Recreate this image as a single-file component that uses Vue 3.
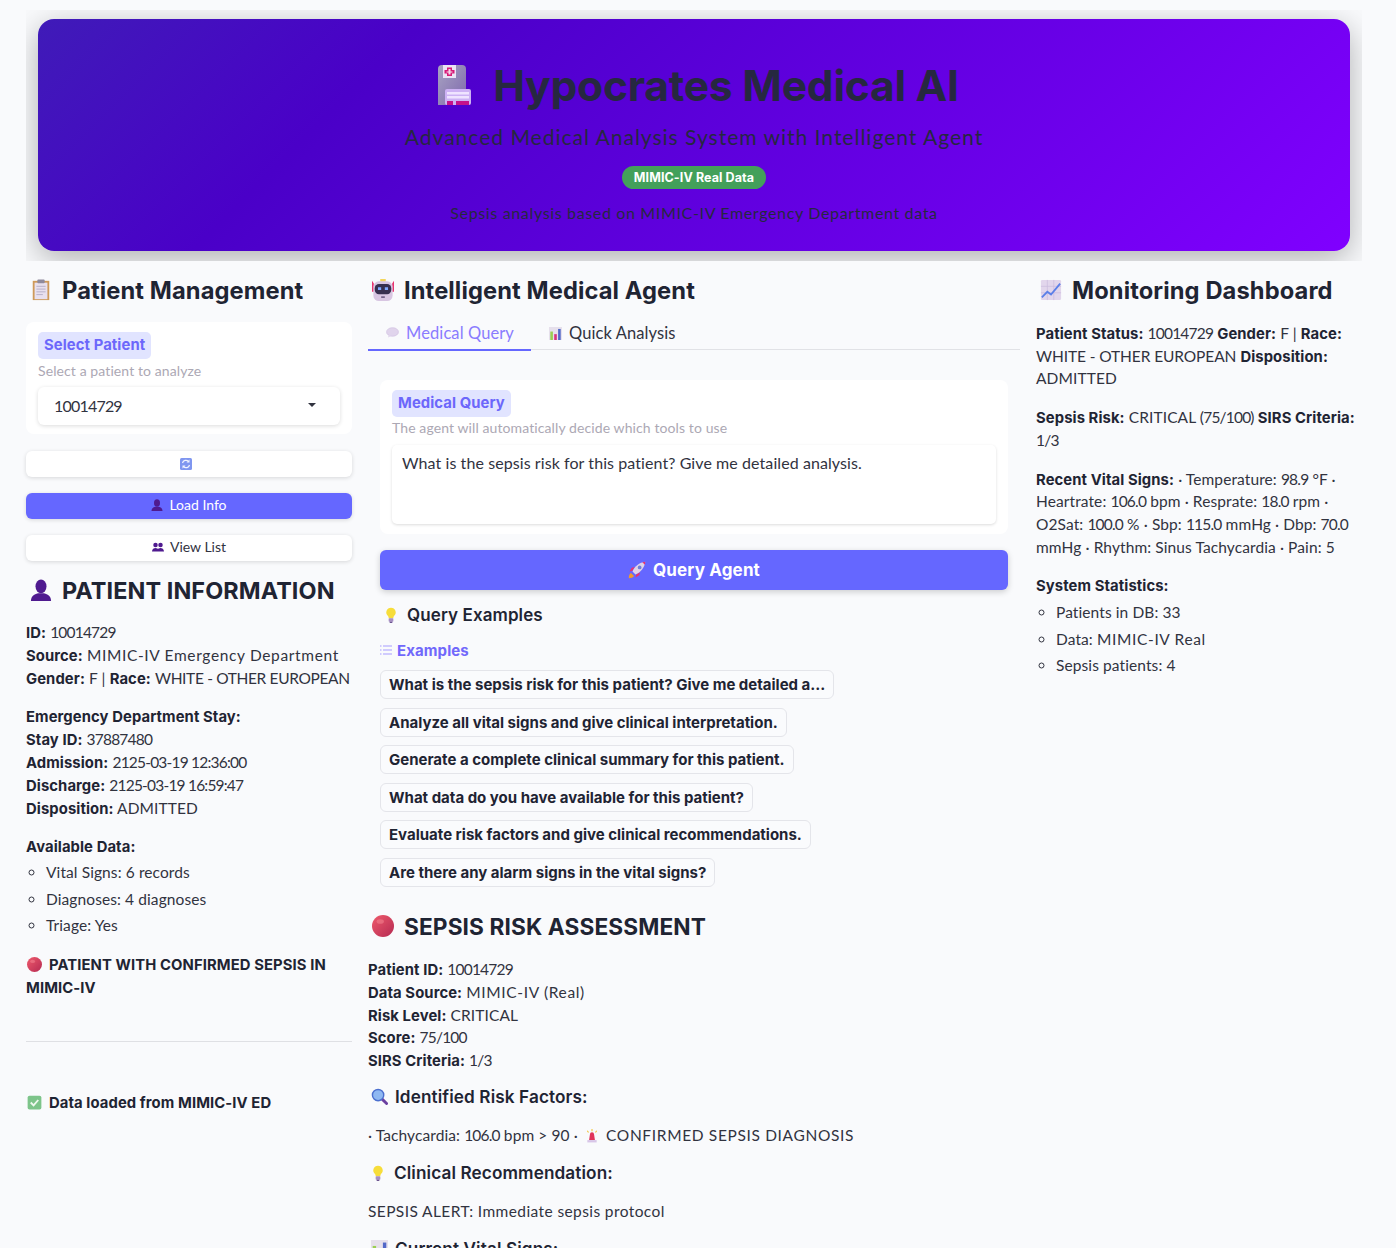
<template>
  <div class="page">
    <svg class="sprite" width="0" height="0" aria-hidden="true">
      <defs>
        <linearGradient id="g-ball" x1="0" y1="0" x2="1" y2="1">
          <stop offset="0" stop-color="#ef5a6c" />
          <stop offset="1" stop-color="#b52a52" />
        </linearGradient>
        <linearGradient id="g-tower" x1="0" y1="0" x2="1" y2="1">
          <stop offset="0" stop-color="#a9a4c2" />
          <stop offset="1" stop-color="#7d67ad" />
        </linearGradient>
        <symbol id="i-hospital" viewBox="0 0 36 40">
          <path d="M2 4a4 4 0 0 1 4-4h20a4 4 0 0 1 4 4v36H2z" fill="url(#g-tower)" />
          <rect x="7" y="0" width="13" height="13" fill="#ece3f5" />
          <path d="M11 2.500h5v2.500h2.500v3.500H16V11h-5V8.500H8.500V5H11z" fill="#d81b78" />
          <path d="M12.500 4h2v2.500h2v1h-2v2h-2v-2h-2v-1h2z" fill="#f3dbe9" />
          <rect x="9" y="24" width="26" height="16" rx="2" fill="#cdb2f4" />
          <rect x="11" y="27" width="22" height="2.500" fill="#efe3ff" />
          <rect x="11" y="31" width="22" height="2.500" fill="#efe3ff" />
          <rect x="11" y="36" width="6" height="4" fill="#c4128a" />
          <rect x="20" y="36" width="13" height="4" fill="#c4128a" />
        </symbol>
        <symbol id="i-clipboard" viewBox="0 0 20 24">
          <rect x="1" y="2" width="18" height="21" fill="#cf9a5a" />
          <rect x="3" y="4" width="14" height="18" fill="#e8e0ee" />
          <rect x="6" y="0.500" width="8" height="4" rx="1" fill="#8f8a9c" />
          <path d="M5 8h10M5 11h10M5 14h10M5 17h7" stroke="#b4adc6" stroke-width="1" />
        </symbol>
        <symbol id="i-robot" viewBox="0 0 24 24">
          <rect x="9" y="0" width="6" height="3" fill="#f3d65b" />
          <path d="M0 2v12h2V5zM24 2v12h-2V5z" fill="#e8346f" />
          <rect x="1.500" y="2.500" width="21" height="21.500" rx="6" fill="#d8c6e2" />
          <rect x="3" y="5.500" width="18" height="11" rx="4.500" fill="#37304f" />
          <rect x="6.500" y="9" width="3.500" height="3" fill="#7fa7ff" />
          <rect x="14" y="9" width="3.500" height="3" fill="#7fa7ff" />
          <rect x="10" y="19" width="4" height="1.500" fill="#5a4a72" />
        </symbol>
        <symbol id="i-chart" viewBox="0 0 24 24">
          <rect x="1" y="1" width="22" height="22" rx="1.500" fill="#e2d6ec" />
          <path d="M1 8h22M1 15h22M8 1v22M15 1v22" stroke="#c9b8db" stroke-width="0.700" />
          <path d="M2 20l6-6 4 3 10-12" fill="none" stroke="#5b7fe8" stroke-width="2" />
        </symbol>
        <symbol id="i-person" viewBox="0 0 24 24">
          <ellipse cx="12" cy="8" rx="6" ry="7.500" fill="#4f1a8f" />
          <path d="M1 24c0-6 5-8 8-8.500h6c3 .5 8 2.500 8 8.500z" fill="#4f1a8f" />
        </symbol>
        <symbol id="i-people" viewBox="0 0 24 20">
          <circle cx="7" cy="6" r="4.500" fill="#4f1a8f" />
          <circle cx="17" cy="6" r="4.500" fill="#4f1a8f" />
          <path d="M0 19c0-5 4-7 7-7s5 2 5 2 2-2 5-2 7 2 7 7z" fill="#4f1a8f" />
        </symbol>
        <symbol id="i-bubble" viewBox="0 0 24 20">
          <ellipse cx="12" cy="9" rx="11" ry="8" fill="#e0d4ec" stroke="#cbb9dd" stroke-width="1" />
          <path d="M5 14l-1 5 6-3z" fill="#e0d4ec" />
        </symbol>
        <symbol id="i-bars" viewBox="0 0 20 20">
          <rect x="0" y="0" width="20" height="20" fill="#e6e0ec" />
          <rect x="2" y="7" width="4" height="13" fill="#9bcf53" />
          <rect x="8" y="11" width="4" height="9" fill="#d8337f" />
          <rect x="14" y="3" width="4" height="17" fill="#5268c8" />
        </symbol>
        <symbol id="i-rocket" viewBox="0 0 24 24">
          <path d="M4 16c-2 1-3 4-3 7 3 0 6-1 7-3z" fill="#f39a2d" />
          <path d="M6 13l-4 1 3-5 4-1zM11 18l-1 4 5-3 1-4z" fill="#e8346f" />
          <path d="M6 14C9 7 15 2 23 1c-1 8-6 14-13 17z" fill="#ded3ea" />
          <circle cx="15.500" cy="8.500" r="2.500" fill="#6f7fd8" />
          <path d="M19 1.500l3.500 3.500L23 1z" fill="#e8346f" />
        </symbol>
        <symbol id="i-bulb" viewBox="0 0 16 24">
          <path d="M8 1a7 7 0 0 1 4.500 12.400c-.8.8-1 2-1 3.600h-7c0-1.600-.2-2.800-1-3.600A7 7 0 0 1 8 1z" fill="#f7dd3a" />
          <rect x="4.500" y="17" width="7" height="5" rx="1" fill="#a78fc4" />
          <rect x="6" y="22" width="4" height="2" fill="#6d5590" />
        </symbol>
        <symbol id="i-ball" viewBox="0 0 24 24">
          <circle cx="12" cy="12" r="12" fill="url(#g-ball)" />
          <ellipse cx="9" cy="7" rx="4" ry="2.500" fill="#f58a96" opacity="0.500" />
        </symbol>
        <symbol id="i-search" viewBox="0 0 24 24">
          <path d="M15 15l7 7" stroke="#6b3fa0" stroke-width="4" stroke-linecap="round" />
          <circle cx="10" cy="10" r="8" fill="#8fb8f2" stroke="#4b6fcf" stroke-width="2" />
        </symbol>
        <symbol id="i-siren" viewBox="0 0 24 24">
          <path d="M12 0v4M4 3l2 3M20 3l-2 3" stroke="#f2c230" stroke-width="1.800" />
          <path d="M7 19l1.500-10a3.500 3.500 0 0 1 7 0L17 19z" fill="#e0355a" />
          <rect x="4" y="19" width="16" height="4" fill="#d8c6e8" />
        </symbol>
        <symbol id="i-check" viewBox="0 0 24 24">
          <rect x="1" y="1" width="22" height="22" rx="3" fill="#7dc48a" />
          <path d="M6 12l4.500 4.500L18 8" fill="none" stroke="#eef8ee" stroke-width="3" />
        </symbol>
        <symbol id="i-refresh" viewBox="0 0 12 12">
          <rect x="0" y="0" width="12" height="12" rx="1.500" fill="#7f96f0" />
          <path d="M2.500 5a3.500 3.500 0 0 1 6-1.500M9.500 7a3.500 3.500 0 0 1-6 1.500" fill="none" stroke="#f2f4ff" stroke-width="1.200" />
          <path d="M9.500 1.500v3h-3zM2.500 10.500v-3h3z" fill="#f2f4ff" />
        </symbol>
      </defs>
    </svg>

    <header class="hero-wrap">
      <div class="hero">
        <h1 class="hero-title">
          <svg class="hero-icon"><use href="#i-hospital" /></svg>
          Hypocrates Medical AI
        </h1>
        <p class="hero-sub">Advanced Medical Analysis System with Intelligent Agent</p>
        <span class="hero-badge">MIMIC-IV Real Data</span>
        <p class="hero-note">Sepsis analysis based on MIMIC-IV Emergency Department data</p>
      </div>
    </header>

    <main class="columns">
      <section class="col">
        <h2 class="title"><svg class="title-icon"><use href="#i-clipboard" /></svg>Patient Management</h2>
        <div class="card select-card">
          <span class="pill">Select Patient</span>
          <p class="hint">Select a patient to analyze</p>
          <div class="select">
            <span class="num">10014729</span>
            <svg class="caret" width="8" height="4" viewBox="0 0 8 4"><path d="M0 0h8L4 4z" fill="#31333f" /></svg>
          </div>
        </div>
        <button class="btn btn-small">
          <svg class="btn-icon"><use href="#i-refresh" /></svg>
        </button>
        <button class="btn btn-small btn-primary">
          <svg class="btn-icon"><use href="#i-person" /></svg>Load Info
        </button>
        <button class="btn btn-small">
          <svg class="btn-icon"><use href="#i-people" /></svg>View List
        </button>

        <h2 class="title title-info"><svg class="title-icon"><use href="#i-person" /></svg>PATIENT INFORMATION</h2>
        <div class="rows">
          <p><b>ID:</b> <span class="num">10014729</span></p>
          <p><b>Source:</b> <span class="wide">MIMIC-IV Emergency Department</span></p>
          <p><b>Gender:</b> F | <b>Race:</b> <span class="caps-tight">WHITE - OTHER EUROPEAN</span></p>
        </div>
        <div class="rows rows-gap">
          <p><b>Emergency Department Stay:</b></p>
          <p><b>Stay ID:</b> <span class="num">37887480</span></p>
          <p><b>Admission:</b> <span class="num">2125-03-19 12:36:00</span></p>
          <p><b>Discharge:</b> <span class="num">2125-03-19 16:59:47</span></p>
          <p><b>Disposition:</b> ADMITTED</p>
        </div>
        <div class="rows rows-gap">
          <p><b>Available Data:</b></p>
        </div>
        <ul class="list">
          <li>Vital Signs: 6 records</li>
          <li>Diagnoses: 4 diagnoses</li>
          <li>Triage: Yes</li>
        </ul>
        <p class="alert-line">
          <svg class="inline-icon"><use href="#i-ball" /></svg><b>PATIENT WITH CONFIRMED SEPSIS IN<br />MIMIC-IV</b>
        </p>
        <hr class="rule" />
        <p class="loaded"><svg class="inline-icon"><use href="#i-check" /></svg><b>Data loaded from MIMIC-IV ED</b></p>
      </section>

      <section class="col">
        <h2 class="title"><svg class="title-icon"><use href="#i-robot" /></svg>Intelligent Medical Agent</h2>
        <div class="tabs">
          <div class="tab tab-active"><svg class="tab-icon"><use href="#i-bubble" /></svg>Medical Query</div>
          <div class="tab"><svg class="tab-icon tab-icon-bars"><use href="#i-bars" /></svg>Quick Analysis</div>
        </div>
        <div class="agent">
          <div class="card query-card">
            <span class="pill">Medical Query</span>
            <p class="hint">The agent will automatically decide which tools to use</p>
            <div class="textarea">What is the sepsis risk for this patient? Give me detailed analysis.</div>
          </div>
          <button class="btn btn-query"><svg class="query-icon"><use href="#i-rocket" /></svg>Query Agent</button>
        </div>
        <h3 class="examples-title"><svg class="h3-icon"><use href="#i-bulb" /></svg>Query Examples</h3>
        <div class="examples">
          <div class="examples-label">
            <svg width="12" height="10" viewBox="0 0 12 10"><path d="M3 1h9M3 5h9M3 9h9M0 1h1.500M0 5h1.500M0 9h1.500" stroke="#a79cff" stroke-width="1" /></svg>
            Examples
          </div>
          <button v-for="q in examples" :key="q" class="example">{{ q }}</button>
        </div>

        <h2 class="title title-sepsis"><svg class="title-icon"><use href="#i-ball" /></svg>SEPSIS RISK ASSESSMENT</h2>
        <div class="rows">
          <p><b>Patient ID:</b> <span class="num">10014729</span></p>
          <p><b>Data Source:</b> <span class="wide">MIMIC-IV (Real)</span></p>
          <p><b>Risk Level:</b> CRITICAL</p>
          <p><b>Score:</b> <span class="num">75/100</span></p>
          <p><b>SIRS Criteria:</b> <span class="num">1/3</span></p>
        </div>
        <h3 class="sub"><svg class="h3-icon h3-icon-square"><use href="#i-search" /></svg>Identified Risk Factors:</h3>
        <p class="para">· Tachycardia: <span class="num">106.0</span> bpm &gt; 90 · <svg class="siren"><use href="#i-siren" /></svg> <span class="wide">CONFIRMED SEPSIS DIAGNOSIS</span></p>
        <h3 class="sub"><svg class="h3-icon"><use href="#i-bulb" /></svg>Clinical Recommendation:</h3>
        <p class="para para-wide">SEPSIS ALERT: Immediate sepsis protocol</p>
        <h3 class="sub"><svg class="h3-icon h3-icon-square"><use href="#i-bars" /></svg>Current Vital Signs:</h3>
      </section>

      <section class="col">
        <h2 class="title"><svg class="title-icon"><use href="#i-chart" /></svg>Monitoring Dashboard</h2>
        <p class="dash"><b>Patient Status:</b> <span class="num">10014729</span> <b>Gender:</b> F | <b>Race:</b><br /><span class="caps">WHITE - OTHER EUROPEAN</span> <b>Disposition:</b><br />ADMITTED</p>
        <p class="dash"><b>Sepsis Risk:</b> CRITICAL <span class="num">(75/100)</span> <b>SIRS Criteria:</b><br /><span class="num">1/3</span></p>
        <p class="dash"><b>Recent Vital Signs:</b> · Temperature: <span class="num">98.9</span> °F ·<br />Heartrate: <span class="num">106.0</span> bpm · Resprate: <span class="num">18.0</span> rpm ·<br />O2Sat: <span class="num">100.0</span> % · Sbp: <span class="num">115.0</span> mmHg · Dbp: <span class="num">70.0</span><br />mmHg · Rhythm: Sinus Tachycardia · Pain: 5</p>
        <p class="dash dash-tight"><b>System Statistics:</b></p>
        <ul class="list list-dash">
          <li>Patients in DB: 33</li>
          <li>Data: <span class="wide">MIMIC-IV Real</span></li>
          <li>Sepsis patients: 4</li>
        </ul>
      </section>
    </main>
  </div>
</template>

<script setup>
const examples = [
  'What is the sepsis risk for this patient? Give me detailed a...',
  'Analyze all vital signs and give clinical interpretation.',
  'Generate a complete clinical summary for this patient.',
  'What data do you have available for this patient?',
  'Evaluate risk factors and give clinical recommendations.',
  'Are there any alarm signs in the vital signs?'
]
</script>

<style>
html, body {
  margin: 0;
  background: #f9fafc;
}
</style>

<style scoped>
.page {
  height: 1248px;
  overflow: hidden;
  padding: 10px 34px 0 26px;
  box-sizing: border-box;
  background: #f9fafc;
  color: #31333f;
  font-family: "Lato", "Noto Sans", sans-serif;
  font-size: 15.5px;
  letter-spacing: 0.1px;
}

.sprite {
  position: absolute;
}

p, h1, h2, h3, ul {
  margin: 0;
  padding: 0;
}

b {
  font-family: "Inter", sans-serif;
  font-weight: 700;
  font-size: 14.8px;
  line-height: 1;
  color: #1f2433;
}

.num {
  letter-spacing: -0.8px;
}

.wide {
  letter-spacing: 0.65px;
}

.caps {
  letter-spacing: -0.1px;
}

.caps-tight {
  letter-spacing: -0.35px;
}

.hero-wrap {
  overflow: hidden;
  padding: 9px 12px 10px;
}

.hero {
  height: 232px;
  box-sizing: border-box;
  padding-top: 41px;
  border-radius: 16px;
  background: linear-gradient(135deg, #3f1bb8 0%, #4a00c8 25%, #8000ff 100%);
  box-shadow: 0 8px 32px rgba(0, 0, 0, 0.3);
  text-align: center;
  color: #262840;
}

.hero-title {
  display: flex;
  align-items: center;
  justify-content: center;
  height: 50px;
  padding-left: 7px;
  font-family: "Inter", sans-serif;
  font-size: 42.5px;
  font-weight: 700;
  letter-spacing: -0.2px;
}

.hero-icon {
  width: 36px;
  height: 40px;
  margin-right: 21px;
}

.hero-sub {
  margin-top: 14px;
  font-size: 21px;
  line-height: 26px;
  letter-spacing: 1px;
}

.hero-badge {
  display: inline-block;
  margin-top: 16px;
  padding: 0 12px;
  height: 23px;
  line-height: 23px;
  border-radius: 12px;
  background: #43a05a;
  color: #fff;
  font-family: "Inter", sans-serif;
  font-size: 12.5px;
  font-weight: 700;
}

.hero-note {
  margin-top: 13px;
  font-size: 16px;
  line-height: 22px;
  letter-spacing: 0.65px;
}

.columns {
  display: grid;
  grid-template-columns: minmax(0, 1fr) minmax(0, 2fr) minmax(0, 1fr);
  gap: 16px;
}

.title {
  display: flex;
  align-items: center;
  height: 58px;
  padding-left: 4px;
  font-family: "Inter", sans-serif;
  font-size: 23.7px;
  font-weight: 700;
  color: #1f2433;
}

.title-icon {
  width: 22px;
  height: 22px;
  margin-right: 10px;
  flex-shrink: 0;
}

.card {
  background: #fff;
  border-radius: 8px;
}

.select-card {
  margin-top: 3px;
  padding: 10px 12px 9px;
}

.pill {
  display: inline-block;
  height: 27px;
  line-height: 26px;
  padding: 0 6px;
  border-radius: 5px;
  background: #e1e4ff;
  color: #6c67fb;
  font-family: "Inter", sans-serif;
  font-size: 14.8px;
  font-weight: 700;
}

.hint {
  margin-top: 3px;
  line-height: 18px;
  font-size: 14px;
  color: #aca8b4;
}

.select {
  display: flex;
  align-items: center;
  justify-content: space-between;
  height: 38px;
  margin-top: 7px;
  padding: 0 24px 2px 16px;
  box-sizing: border-box;
  border-radius: 6px;
  box-shadow: 0 1px 4px rgba(0, 0, 0, 0.14);
  font-size: 16px;
}

.btn {
  display: flex;
  align-items: center;
  justify-content: center;
  width: 100%;
  border: 0;
  border-radius: 6px;
  background: #fff;
  color: #31333f;
  font: inherit;
  box-shadow: 0 1px 4px rgba(0, 0, 0, 0.14);
}

.btn-small {
  height: 26px;
  margin-top: 16px;
  padding: 0 0 3px;
  font-size: 14px;
}

.btn-small:first-of-type {
  margin-top: 17px;
  padding: 0;
}

.btn-primary {
  background: #6567ff;
  color: #fff;
}

.btn-icon {
  width: 12px;
  height: 12px;
  margin-right: 6px;
}

.title-info {
  font-size: 23.4px;
}

.rows {
  margin-top: 2px;
  line-height: 22.8px;
  white-space: nowrap;
}

.rows-gap {
  margin-top: 16px;
}

.list {
  margin-top: 1px;
  padding-left: 20px;
  line-height: 26.6px;
  list-style: circle;
}

.alert-line {
  margin-top: 14px;
  line-height: 23px;
}

.inline-icon {
  width: 15px;
  height: 15px;
  margin: 0 7px 0 1px;
  vertical-align: -2px;
}

.rule {
  margin: 42px 0 0;
  border: 0;
  border-top: 1px solid #dfe0e4;
}

.loaded {
  margin-top: 49px;
  line-height: 23px;
}

.tabs {
  display: flex;
  height: 30px;
  border-bottom: 1px solid #e1e2e6;
  font-size: 16.5px;
}

.tab {
  display: flex;
  align-items: center;
  justify-content: center;
  height: 30px;
  box-sizing: border-box;
  padding: 0 17px 2px 18px;
}

.tab-active {
  height: 32px;
  border-bottom: 2px solid #6567ff;
  color: #8a7cff;
  padding-bottom: 3px;
}

.tab-icon {
  width: 13px;
  height: 11px;
  margin-right: 7px;
}

.tab-icon-bars {
  width: 13px;
  height: 13px;
}

.agent {
  padding: 30px 12px 0;
}

.query-card {
  padding: 10px 12px;
}

.query-card .hint {
  margin-top: 2px;
}

.textarea {
  height: 79px;
  box-sizing: border-box;
  margin-top: 8px;
  padding: 8px 10px;
  border-radius: 5px;
  box-shadow: 0 1px 3px rgba(0, 0, 0, 0.14);
  font-size: 16px;
  line-height: 20px;
  letter-spacing: 0.08px;
}

.btn-query {
  height: 40px;
  margin-top: 16px;
  padding-bottom: 2px;
  background: #6567ff;
  color: #fff;
  font-family: "Inter", sans-serif;
  font-size: 17px;
  font-weight: 700;
  letter-spacing: 0.15px;
  box-shadow: 0 2px 6px rgba(0, 0, 0, 0.18);
}

.query-icon {
  width: 18px;
  height: 18px;
  margin-right: 7px;
}

.examples-title {
  display: flex;
  align-items: center;
  height: 24px;
  margin: 13px 0 0 16px;
  font-family: "Inter", sans-serif;
  font-size: 17px;
  font-weight: 600;
  color: #1f2433;
}

.h3-icon {
  width: 14px;
  height: 16px;
  margin-right: 9px;
  flex-shrink: 0;
}

.h3-icon-square {
  width: 17px;
  height: 17px;
  margin-right: 7px;
}

.examples {
  display: flex;
  flex-direction: column;
  align-items: flex-start;
  padding: 13px 12px 0;
}

.examples-label {
  display: flex;
  align-items: center;
  gap: 5px;
  height: 20px;
  font-family: "Inter", sans-serif;
  font-size: 15px;
  font-weight: 700;
  color: #7168fb;
}

.example {
  height: 29px;
  margin: 0 0 8.500px;
  padding: 0 8px;
  border: 1px solid #e4e5ea;
  border-radius: 6px;
  background: #fafbfd;
  color: #1f2433;
  font-family: "Inter", sans-serif;
  font-size: 15px;
  font-weight: 700;
}

.examples-label + .example {
  margin-top: 10px;
}

.title-sepsis {
  margin-top: 2px;
  font-size: 22.7px;
}

.title-sepsis + .rows {
  margin-top: 3px;
}

.sub {
  display: flex;
  align-items: center;
  height: 24px;
  margin-top: 13px;
  padding-left: 3px;
  font-family: "Inter", sans-serif;
  font-size: 17.2px;
  font-weight: 600;
  color: #1f2433;
}

.sub + .para {
  margin-top: 15px;
}

.para {
  line-height: 22px;
  font-size: 15.5px;
}

.para + .sub {
  margin-top: 15px;
}

.para-wide {
  letter-spacing: 0.4px;
}

.siren {
  width: 14px;
  height: 14px;
  margin: 0 3px;
  vertical-align: -2px;
}

.dash {
  margin-top: 3px;
  margin-bottom: 16px;
  line-height: 22.7px;
  white-space: nowrap;
}

.dash + .dash {
  margin-top: 0;
}

.dash-tight {
  margin-bottom: 0;
}

.list-dash {
  margin-top: 2px;
}
</style>
